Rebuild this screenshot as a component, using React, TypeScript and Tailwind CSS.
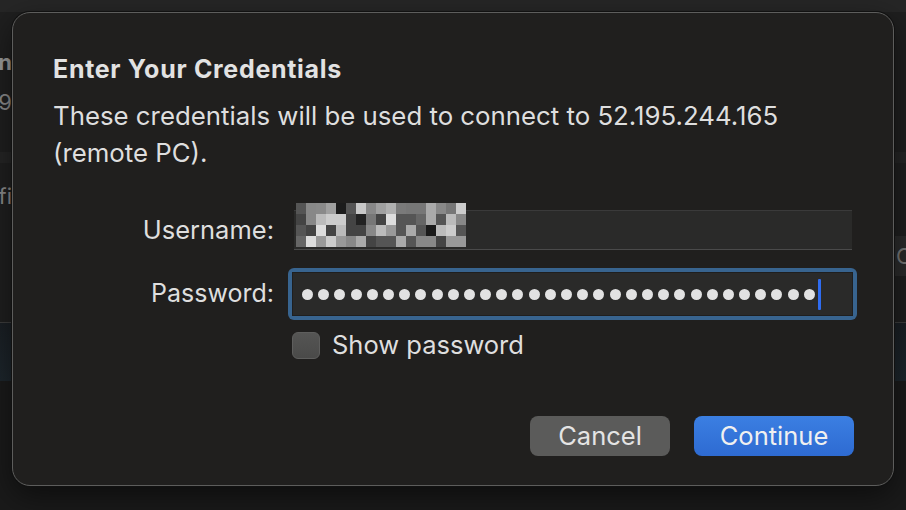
const MOSAIC = [
  ['#555', '#888', '#8a8a8a', '#a0a0a0', '#1c1c1c', '#555', '#c8c8c8', '#888', '#a0a0a0', '#b0b0b0', '#7a7a7a', '#777', '#777', '#aaa', '#888', '#777', '#ccc'],
  ['#444', '#888', '#bbb', '#ccc', '#ccc', '#444', '#222', '#777', '#444', '#ddd', '#555', '#555', '#666', '#aaa', '#555', '#bbb', '#888'],
  ['#555', '#444', '#ddd', '#444', '#bbb', '#444', '#444', '#888', '#bbb', '#999', '#555', '#aaa', '#555', '#1a1a1a', '#bbb', '#ccc', '#555'],
  ['#666', '#ddd', '#999', '#ccc', '#999', '#888', '#aaa', '#444', '#555', '#555', '#aaa', '#555', '#888', '#888', '#444', '#999', '#999'],
]

const FONT = "font-['Inter','Liberation_Sans',sans-serif]"

function Backdrop() {
  return (
    <div className={`h-[510px] w-[906px] bg-[#1f1f1f] text-[#8a8a8a] flex flex-col ${FONT}`}>
      <div className="h-[12px] bg-[#262626] shrink-0" />
      <div className="h-[140px] flex justify-between">
        <div className="w-[12px] overflow-hidden flex flex-col items-end pt-[30px] text-[22px] leading-[40px]">
          <span className="font-bold text-[#9a9a9a]">Domain</span>
          <span>2019</span>
        </div>
      </div>
      <div className="h-[11px] bg-[#252525]" />
      <div className="h-[159px] flex justify-between">
        <div className="w-[12px] overflow-hidden flex flex-col items-end pt-[18px] text-[22px] leading-[30px]">
          <span>Profi</span>
        </div>
        <div className="w-[12px] mt-[73px] h-[40px] bg-[#2b2b2b] overflow-hidden text-[22px] leading-[40px] pl-[2px] text-[#777]">
          Co
        </div>
      </div>
      <div className="h-px bg-[#3d3d3d]" />
      <div className="h-[58px] bg-gradient-to-b from-[#1a1f24] to-[#1d262c]" />
      <div className="flex-1 bg-[#1a1a1a]" />
    </div>
  )
}

export default function App() {
  return (
    <div className="relative w-[906px] h-[510px] overflow-hidden">
      <Backdrop />

      {/* Credentials sheet */}
      <div
        className={`absolute left-[12px] top-[12px] w-[882px] h-[474px] rounded-[18px] border border-[#5d5d5c] bg-[#201f1e] shadow-[0_0_0_1px_#111,0_10px_30px_rgba(0,0,0,0.5)] pl-[40px] pr-[39px] ${FONT} text-[#dedede]`}
      >
        <h1 className="mt-[41px] text-[25px] leading-[30px] font-bold text-[#e2e2e2] tracking-[0.7px]">
          Enter Your Credentials
        </h1>
        <p className="mt-[13px] text-[25.8px] leading-[37px]">
          These credentials will be used to connect to 52.195.244.165
          <br />
          (remote PC).
        </p>

        <div className="mt-[39px] flex flex-col">
          {/* Username */}
          <div className="flex items-center h-[40px]">
            <span className="w-[222px] shrink-0 text-right text-[25.5px] pr-[1px]">Username:</span>
            <div className="relative shrink-0 ml-[19px] w-[558px] h-[40px] bg-[#2a2a29] border-t border-[#3a3a3a] border-b border-b-[#4a4a4a]">
              <div className="absolute left-[2px] top-[-8px] flex flex-col">
                {MOSAIC.map((row, r) => (
                  <div key={r} className="flex">
                    {row.map((c, i) => (
                      <div key={i} className="w-[10px] h-[11px]" style={{ backgroundColor: c }} />
                    ))}
                  </div>
                ))}
              </div>
            </div>
          </div>

          {/* Password */}
          <div className="flex items-center h-[52px] mt-[18px]">
            <span className="w-[222px] shrink-0 text-right text-[25px] pr-[1px]">Password:</span>
            <div className="shrink-0 ml-[13px] w-[569px] h-[52px] rounded-[6px] bg-[#38648f] p-[4px]">
              <div className="h-full bg-[#2a2a29] border border-[#1f1f1f] flex items-center pl-[9px]">
                <div className="flex gap-[5.2px]">
                  {Array.from({ length: 32 }).map((_, i) => (
                    <div key={i} className="w-[11px] h-[11px] rounded-full bg-[#e2e2e2]" />
                  ))}
                </div>
                <div className="ml-[3px] w-[3px] h-[31px] rounded-[1px] bg-[#2f6cf0]" />
              </div>
            </div>
          </div>

          {/* Show password */}
          <label className="flex items-center mt-[10px] ml-[239px] gap-[12px]">
            <span className="w-[28px] h-[27px] rounded-[6px] bg-gradient-to-b from-[#555554] to-[#4a4a49] border border-[#5e5e5d]" />
            <span className="text-[25.5px] leading-[30px]">Show password</span>
          </label>
        </div>

        <div className="mt-[56px] flex justify-end gap-[24px]">
          <button className="w-[140px] h-[40px] rounded-[8px] bg-[#5b5b5a] text-[25.5px] text-[#e4e4e4]">
            Cancel
          </button>
          <button className="w-[160px] h-[40px] rounded-[8px] bg-gradient-to-b from-[#3b7fe2] to-[#2e6bd2] text-[25.5px] text-[#f0f0f0]">
            Continue
          </button>
        </div>
      </div>
    </div>
  )
}
